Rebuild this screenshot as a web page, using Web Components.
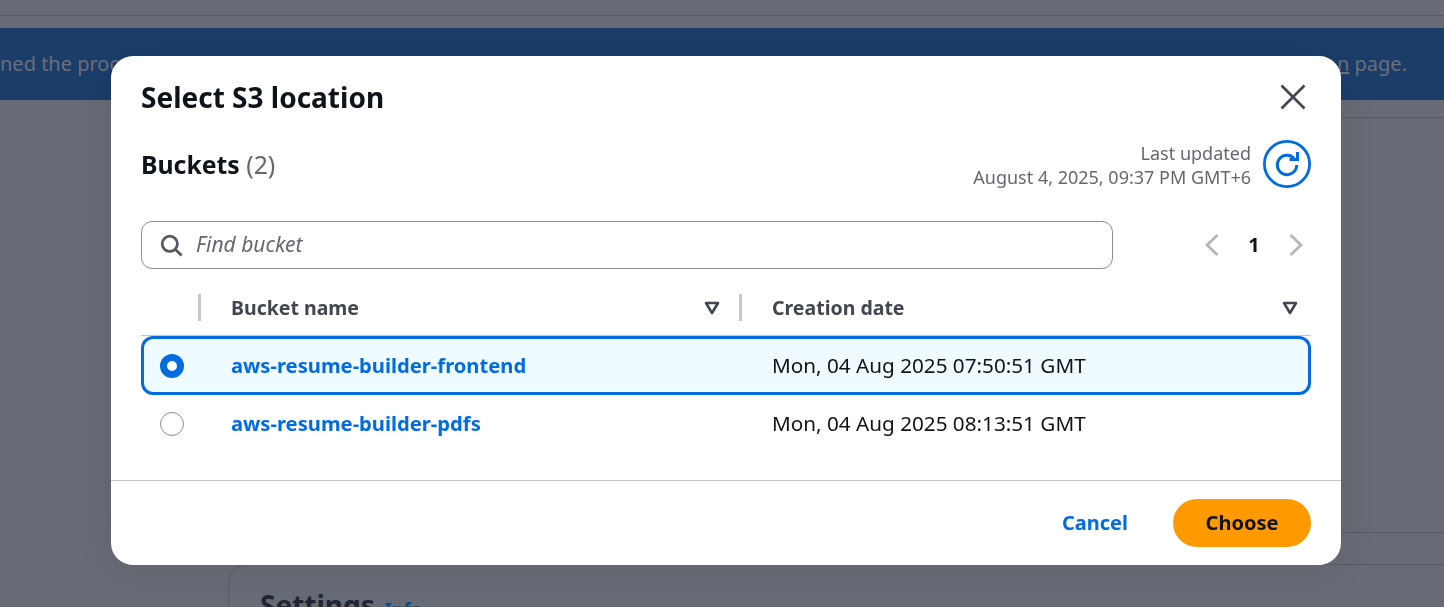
<!DOCTYPE html>
<html lang="en">
<head>
<meta charset="utf-8">
<title>Select S3 location</title>
<style>
  html, body { margin: 0; height: 100%; overflow: hidden; background: #676b75; }
  body { font-family: "Noto Sans", "Liberation Sans", sans-serif; }
</style>
</head>
<body>
<s3-backdrop>
  <span slot="left">ned the proc</span>
  <span slot="right"><u>n</u> page.</span>
</s3-backdrop>

<s3-modal heading="Select S3 location">
  <s3-table-head count="2" updated="August 4, 2025, 09:37 PM GMT+6"></s3-table-head>
  <s3-toolbar placeholder="Find bucket" page="1"></s3-toolbar>
  <s3-col-header first="Bucket name" second="Creation date"></s3-col-header>
  <s3-bucket-row selected name="aws-resume-builder-frontend" date="Mon, 04 Aug 2025 07:50:51 GMT"></s3-bucket-row>
  <s3-bucket-row name="aws-resume-builder-pdfs" date="Mon, 04 Aug 2025 08:13:51 GMT"></s3-bucket-row>
  <s3-link-button slot="footer">Cancel</s3-link-button>
  <s3-primary-button slot="footer">Choose</s3-primary-button>
</s3-modal>

<script>
class S3Backdrop extends HTMLElement {
    constructor() {
        super();
        this.shadowDOM = this.attachShadow({mode: "open"});
    }
    connectedCallback() {
        this.shadowDOM.innerHTML = `
          <style>
            :host { display: block; color: #6b6f79; font-size: 20px; }
            .top { height: 15px; border-bottom: 1px solid #575b66; margin-bottom: 12px; }
            .banner {
                height: 72px; background: #1b3d6a; display: flex; align-items: center;
                justify-content: space-between; padding: 0 37px 0 0; margin-bottom: 17px;
                line-height: 70px;
            }
            .cards { padding-left: 228px; display: flex; flex-direction: column; gap: 31px; width: 1400px; }
            .card { border: 1px solid #575b66; border-radius: 20px; box-sizing: border-box; }
            .one { height: 416px; }
            .two { padding: 22px 31px; height: 120px; }
            h2 { margin: 0; font-size: 28px; line-height: 36px; font-weight: 700; color: #202732; display: inline; }
            a { color: #0d4a8c; font-size: 18px; font-weight: 700; margin-left: 10px; }
          </style>
          <div class="top"></div>
          <div class="banner"><slot name="left"></slot><slot name="right"></slot></div>
          <div class="cards">
            <div class="card one"></div>
            <div class="card two"><h2>Settings</h2><a>Info</a></div>
          </div>`;
    }
}

class S3Modal extends HTMLElement {
    constructor() {
        super();
        this.shadowDOM = this.attachShadow({mode: "open"});
    }
    connectedCallback() {
        this.shadowDOM.innerHTML = `
          <style>
            :host { display: block; position: fixed; top: 56px; left: 111px; width: 1230px; height: 509px;
                    background: #fff; border-radius: 22px; color: #0f141a;
                    box-shadow: 0 4px 40px rgba(0, 7, 22, .08); }
            .wrap { display: flex; flex-direction: column; height: 100%; }
            header { display: flex; justify-content: space-between; align-items: center;
                     padding: 22px 35px 0 30px; height: 38px; }
            h1 { margin: 0; font-size: 28px; font-weight: 700; line-height: 38px; }
            svg { display: block; }
            .body { flex: 1; padding: 0 30px; }
            footer { border-top: 1.4px solid #c6c6cd; display: flex; justify-content: flex-end; align-items: center;
                     gap: 45px; padding: 0 30px; height: 84px; }
          </style>
          <div class="wrap">
            <header>
              <h1>${this.getAttribute("heading")}</h1>
              <svg width="26" height="26" viewBox="0 0 26 26" fill="none" stroke="#424650" stroke-width="2.7"><path d="M1.5 1.5 24.5 24.5M24.5 1.5 1.5 24.5"/></svg>
            </header>
            <div class="body"><slot></slot></div>
            <footer><slot name="footer"></slot></footer>
          </div>`;
    }
}

class S3TableHead extends HTMLElement {
    constructor() {
        super();
        this.shadowDOM = this.attachShadow({mode: "open"});
    }
    connectedCallback() {
        this.shadowDOM.innerHTML = `
          <style>
            :host { display: flex; justify-content: space-between; align-items: center; padding-top: 24px; height: 48px; }
            h2 { margin: 0; font-size: 24.8px; font-weight: 700; line-height: 34px; }
            h2 span { font-weight: 400; color: #656871; }
            .right { display: flex; align-items: center; gap: 12px; }
            .stamp { text-align: right; font-size: 18px; line-height: 24px; padding-top: 1px; color: #656871; }
            svg { display: block; }
          </style>
          <h2>Buckets <span>(${this.getAttribute("count")})</span></h2>
          <div class="right">
            <div class="stamp">Last updated<br>${this.getAttribute("updated")}</div>
            <svg width="48" height="48" viewBox="0 0 48 48" fill="none" stroke="#006ce0" stroke-width="2.8">
              <circle cx="24" cy="24" r="22.6"/>
              <path d="M31 18.2A9.7 9.7 0 1 0 33.7 25" stroke-width="3"/>
              <path d="M26.5 19.5H34.5V12" stroke-width="3"/>
            </svg>
          </div>`;
    }
}

class S3Toolbar extends HTMLElement {
    constructor() {
        super();
        this.shadowDOM = this.attachShadow({mode: "open"});
    }
    connectedCallback() {
        this.shadowDOM.innerHTML = `
          <style>
            :host { display: flex; align-items: center; margin-top: 33px; height: 48px; }
            .search { box-sizing: border-box; width: 972px; height: 48px; border: 1.4px solid #8c8c94; border-radius: 11px;
                      display: flex; align-items: center; gap: 13px; padding-left: 18px; }
            .ph { font-style: italic; font-size: 21px; color: #656871; padding-bottom: 2px; }
            .pager { display: flex; align-items: center; margin-left: 92px; }
            .pager b { width: 70px; text-align: center; font-size: 20px; font-weight: 700; color: #0f141a; padding-bottom: 2px; }
            svg { display: block; }
          </style>
          <div class="search">
            <svg width="23" height="23" viewBox="0 0 23 23" fill="none" stroke="#545861" stroke-width="2.8"><circle cx="9.8" cy="9.8" r="7.6"/><path d="M15.2 15.2 21.6 21.6"/></svg>
            <span class="ph">${this.getAttribute("placeholder")}</span>
          </div>
          <div class="pager">
            <svg width="14" height="24" viewBox="0 0 14 24" fill="none" stroke="#b4b4bb" stroke-width="2.7"><path d="M12.5 2 2 12 12.5 22"/></svg>
            <b>${this.getAttribute("page")}</b>
            <svg width="14" height="24" viewBox="0 0 14 24" fill="none" stroke="#b4b4bb" stroke-width="2.7"><path d="M1.5 2 12 12 1.5 22"/></svg>
          </div>`;
    }
}

const sortIcon = `<svg width="16" height="14" viewBox="0 0 16 14" fill="none" stroke="#424650" stroke-width="2.6" stroke-linejoin="round"><path d="M2 2H14L8 12Z"/></svg>`;

class S3ColHeader extends HTMLElement {
    constructor() {
        super();
        this.shadowDOM = this.attachShadow({mode: "open"});
    }
    connectedCallback() {
        this.shadowDOM.innerHTML = `
          <style>
            :host { display: grid; grid-template-columns: 57px 541px 1fr; height: 67px; box-sizing: border-box;
                    padding-bottom: 14px; align-items: end; border-bottom: 1.4px solid #c6c6cd;
                    color: #424650; font-weight: 700; }
            .cell { height: 27px; display: flex; align-items: center; justify-content: space-between;
                    border-left: 3px solid #c6c6cd; padding: 0 19px 0 30px; line-height: 27px; font-size: 19.5px; }
            .cell:last-child { padding-right: 13px; }
            .blank { height: 27px; }
          </style>
          <div class="blank"></div>
          <div class="cell"><span>${this.getAttribute("first")}</span>${sortIcon}</div>
          <div class="cell"><span>${this.getAttribute("second")}</span>${sortIcon}</div>`;
    }
}

class S3BucketRow extends HTMLElement {
    constructor() {
        super();
        this.shadowDOM = this.attachShadow({mode: "open"});
    }
    connectedCallback() {
        this.shadowDOM.innerHTML = `
          <style>
            :host { display: grid; grid-template-columns: 60px 541px 1fr; align-items: center; height: 58px;
                    box-sizing: border-box; color: #0f141a; border: 3px solid transparent; }
            :host([selected]) { height: 59px; border-color: #006ce0; border-radius: 12px; background: #f0fbff; }
            .radio { width: 24px; height: 24px; box-sizing: border-box; border-radius: 50%; border: 1.6px solid #8c8c94;
                     margin-left: 16px; }
            :host([selected]) .radio { border: 7.5px solid #006ce0; background: #fff; }
            a { color: #006ce0; font-weight: 700; font-size: 20.2px; padding: 0 0 2px 27px; }
            .date { padding: 0 0 2px 27px; font-size: 20.7px; }
          </style>
          <div class="radio"></div>
          <a>${this.getAttribute("name")}</a>
          <div class="date">${this.getAttribute("date")}</div>`;
    }
}

class S3LinkButton extends HTMLElement {
    constructor() {
        super();
        this.attachShadow({mode: "open"}).innerHTML = `
          <style>:host { display: block; color: #006ce0; font-size: 20px; font-weight: 700; padding-bottom: 2px; }</style>
          <slot></slot>`;
    }
}

class S3PrimaryButton extends HTMLElement {
    constructor() {
        super();
        this.attachShadow({mode: "open"}).innerHTML = `
          <style>
            :host { display: flex; align-items: center; justify-content: center; width: 138px; height: 48px; box-sizing: border-box;
                    border-radius: 24px; background: #ff9900; color: #0f141a; font-size: 20px; font-weight: 700; padding-bottom: 2px; }
          </style>
          <slot></slot>`;
    }
}

customElements.define("s3-backdrop", S3Backdrop);
customElements.define("s3-modal", S3Modal);
customElements.define("s3-table-head", S3TableHead);
customElements.define("s3-toolbar", S3Toolbar);
customElements.define("s3-col-header", S3ColHeader);
customElements.define("s3-bucket-row", S3BucketRow);
customElements.define("s3-link-button", S3LinkButton);
customElements.define("s3-primary-button", S3PrimaryButton);
</script>
</body>
</html>
